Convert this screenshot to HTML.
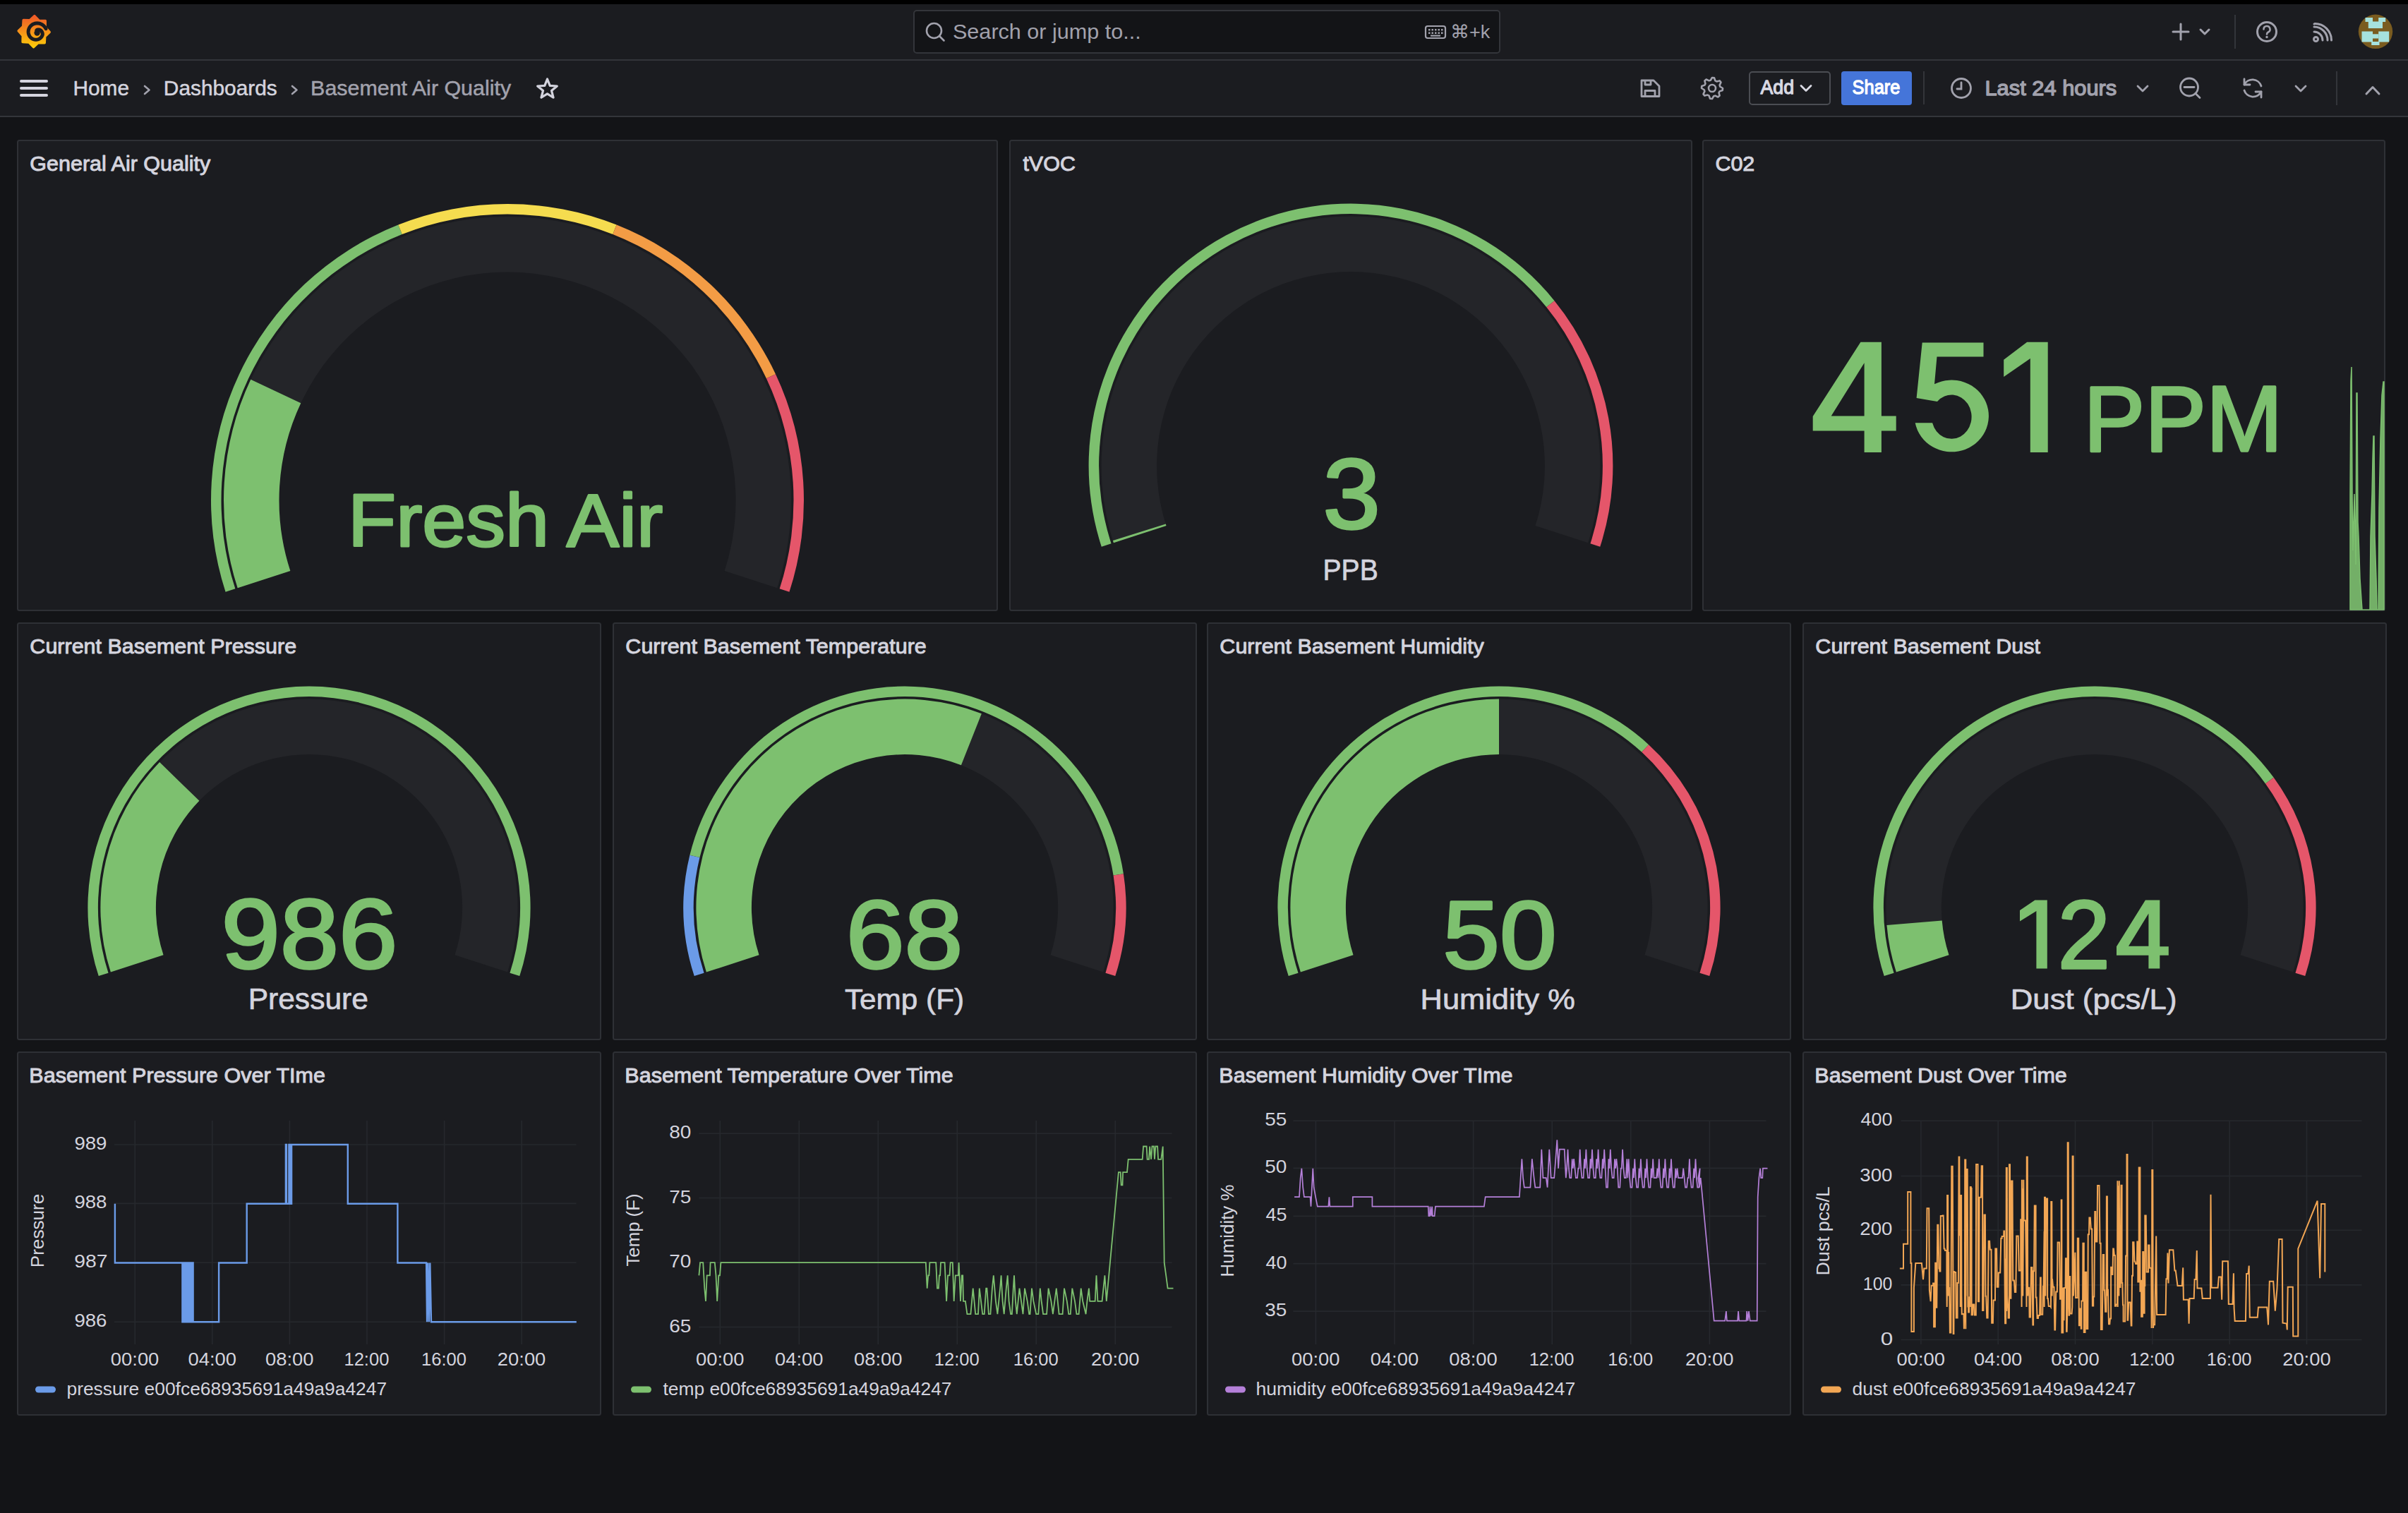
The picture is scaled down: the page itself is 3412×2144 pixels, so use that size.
<!DOCTYPE html>
<html><head><meta charset="utf-8"><title>Basement Air Quality - Dashboards - Grafana</title>
<style>html,body{margin:0;padding:0;background:#131417;overflow:hidden}svg{display:block}text{font-family:"Liberation Sans",sans-serif;white-space:pre}</style>
</head><body>
<svg width="3412" height="2144" viewBox="0 0 3412 2144">
<rect x='0' y='0' width='3412' height='2144' rx='0' fill='#131417'/>
<rect x='0' y='0' width='3412' height='6' rx='0' fill='#000'/>
<rect x='0' y='6' width='3412' height='78' rx='0' fill='#1b1c20'/>
<rect x='0' y='84' width='3412' height='2' rx='0' fill='#33353a'/>
<rect x='0' y='86' width='3412' height='78' rx='0' fill='#1b1c20'/>
<rect x='0' y='164' width='3412' height='2' rx='0' fill='#33353a'/>
<rect x='25' y='199' width='1388' height='666' rx='2.5' fill='#1b1c20' stroke='#2e3035' stroke-width='2'/>
<rect x='1431' y='199' width='966' height='666' rx='2.5' fill='#1b1c20' stroke='#2e3035' stroke-width='2'/>
<rect x='2413' y='199' width='966' height='666' rx='2.5' fill='#1b1c20' stroke='#2e3035' stroke-width='2'/>
<rect x='25' y='883' width='826' height='590' rx='2.5' fill='#1b1c20' stroke='#2e3035' stroke-width='2'/>
<rect x='869' y='883' width='826' height='590' rx='2.5' fill='#1b1c20' stroke='#2e3035' stroke-width='2'/>
<rect x='1711' y='883' width='826' height='590' rx='2.5' fill='#1b1c20' stroke='#2e3035' stroke-width='2'/>
<rect x='2555' y='883' width='826' height='590' rx='2.5' fill='#1b1c20' stroke='#2e3035' stroke-width='2'/>
<rect x='25' y='1491' width='826' height='514' rx='2.5' fill='#1b1c20' stroke='#2e3035' stroke-width='2'/>
<rect x='869' y='1491' width='826' height='514' rx='2.5' fill='#1b1c20' stroke='#2e3035' stroke-width='2'/>
<rect x='1711' y='1491' width='826' height='514' rx='2.5' fill='#1b1c20' stroke='#2e3035' stroke-width='2'/>
<rect x='2555' y='1491' width='826' height='514' rx='2.5' fill='#1b1c20' stroke='#2e3035' stroke-width='2'/>
<path d='M336.68,833.22 A402,402 0 1 1 1101.32,833.22 L1026.67,808.97 A323.5,323.5 0 1 0 411.33,808.97 Z' fill='#242529'/>
<path d='M336.68,833.22 A402,402 0 0 1 355.26,537.84 L426.29,571.26 A323.5,323.5 0 0 0 411.33,808.97 Z' fill='#7dc06f'/>
<path d='M319.56,838.79 A420,420 0 0 1 564.39,318.49 L569.73,331.98 A405.5,405.5 0 0 0 333.35,834.31 Z' fill='#7dc06f'/>
<path d='M564.39,318.49 A420,420 0 0 1 873.61,318.49 L868.27,331.98 A405.5,405.5 0 0 0 569.73,331.98 Z' fill='#f5dc4f'/>
<path d='M873.61,318.49 A420,420 0 0 1 1099.03,530.17 L1085.91,536.35 A405.5,405.5 0 0 0 868.27,331.98 Z' fill='#f39c45'/>
<path d='M1099.03,530.17 A420,420 0 0 1 1118.44,838.79 L1104.65,834.31 A405.5,405.5 0 0 0 1085.91,536.35 Z' fill='#e5566a'/>
<path d='M1577.90,769.21 A353.4,353.4 0 1 1 2250.10,769.21 L2175.45,744.95 A274.9,274.9 0 1 0 1652.55,744.95 Z' fill='#242529'/>
<path d='M1577.90,769.21 A353.4,353.4 0 0 1 1576.88,766.03 L1651.77,742.48 A274.9,274.9 0 0 0 1652.55,744.95 Z' fill='#7dc06f'/>
<path d='M1560.78,774.77 A371.4,371.4 0 0 1 2202.53,426.15 L2191.27,435.28 A356.9,356.9 0 0 0 1574.57,770.29 Z' fill='#7dc06f'/>
<path d='M2202.53,426.15 A371.4,371.4 0 0 1 2267.22,774.77 L2253.43,770.29 A356.9,356.9 0 0 0 2191.27,435.28 Z' fill='#e5566a'/>
<path d='M156.87,1377.55 A295.6,295.6 0 1 1 719.13,1377.55 L644.47,1353.29 A217.10000000000002,217.10000000000002 0 1 0 231.53,1353.29 Z' fill='#242529'/>
<path d='M156.87,1377.55 A295.6,295.6 0 0 1 226.11,1080.09 L282.38,1134.82 A217.10000000000002,217.10000000000002 0 0 0 231.53,1353.29 Z' fill='#7dc06f'/>
<path d='M139.75,1383.11 A313.6,313.6 0 1 1 736.25,1383.11 L722.46,1378.63 A299.1,299.1 0 1 0 153.54,1378.63 Z' fill='#7dc06f'/>
<path d='M1000.87,1377.55 A295.6,295.6 0 1 1 1563.13,1377.55 L1488.47,1353.29 A217.10000000000002,217.10000000000002 0 1 0 1075.53,1353.29 Z' fill='#242529'/>
<path d='M1000.87,1377.55 A295.6,295.6 0 0 1 1390.82,1011.36 L1361.92,1084.35 A217.10000000000002,217.10000000000002 0 0 0 1075.53,1353.29 Z' fill='#7dc06f'/>
<path d='M983.75,1383.11 A313.6,313.6 0 0 1 977.39,1211.65 L991.47,1215.10 A299.1,299.1 0 0 0 997.54,1378.63 Z' fill='#6b9be8'/>
<path d='M977.39,1211.65 A313.6,313.6 0 0 1 1591.92,1238.31 L1577.59,1240.52 A299.1,299.1 0 0 0 991.47,1215.10 Z' fill='#7dc06f'/>
<path d='M1591.92,1238.31 A313.6,313.6 0 0 1 1580.25,1383.11 L1566.46,1378.63 A299.1,299.1 0 0 0 1577.59,1240.52 Z' fill='#e5566a'/>
<path d='M1842.87,1377.55 A295.6,295.6 0 1 1 2405.13,1377.55 L2330.47,1353.29 A217.10000000000002,217.10000000000002 0 1 0 1917.53,1353.29 Z' fill='#242529'/>
<path d='M1842.87,1377.55 A295.6,295.6 0 0 1 2124.00,990.60 L2124.00,1069.10 A217.10000000000002,217.10000000000002 0 0 0 1917.53,1353.29 Z' fill='#7dc06f'/>
<path d='M1825.75,1383.11 A313.6,313.6 0 0 1 2336.07,1055.18 L2326.27,1065.86 A299.1,299.1 0 0 0 1839.54,1378.63 Z' fill='#7dc06f'/>
<path d='M2336.07,1055.18 A313.6,313.6 0 0 1 2422.25,1383.11 L2408.46,1378.63 A299.1,299.1 0 0 0 2326.27,1065.86 Z' fill='#e5566a'/>
<path d='M2686.87,1377.55 A295.6,295.6 0 1 1 3249.13,1377.55 L3174.47,1353.29 A217.10000000000002,217.10000000000002 0 1 0 2761.53,1353.29 Z' fill='#242529'/>
<path d='M2686.87,1377.55 A295.6,295.6 0 0 1 2673.45,1311.06 L2751.67,1304.46 A217.10000000000002,217.10000000000002 0 0 0 2761.53,1353.29 Z' fill='#7dc06f'/>
<path d='M2669.75,1383.11 A313.6,313.6 0 0 1 3221.71,1101.87 L3209.98,1110.39 A299.1,299.1 0 0 0 2683.54,1378.63 Z' fill='#7dc06f'/>
<path d='M3221.71,1101.87 A313.6,313.6 0 0 1 3266.25,1383.11 L3252.46,1378.63 A299.1,299.1 0 0 0 3209.98,1110.39 Z' fill='#e5566a'/>
<path d='M2636.4,484.8 L2665.9,484.8 L2665.9,589.5 L2686.7,589.5 L2686.7,610.4 L2665.9,610.4 L2665.9,641.0 L2641.6,641.0 L2641.6,610.4 L2568.7,610.4 L2568.7,590.1 Z M2594.7,589.5 L2641.6,589.5 L2641.6,514.3 Z' fill='#7dc06f' fill-rule='evenodd'/>
<path d='M2723.7,485.4 L2810.5,485.4 L2810.5,505.6 L2744.5,505.6 L2741,544.3 A52.6,50.9 0 1 1 2713.7,599.3 L2738.1,599.3 A28.3,31.2 0 1 0 2745,568.9 L2735.9,567.5 L2715.6,564 Z' fill='#7dc06f'/>
<path d='M2872.2,484.8 L2901.7,484.8 L2901.7,640.9 L2876.8,640.9 L2876.8,508.0 L2839.2,534.0 L2839.2,509.7 Z' fill='#7dc06f' fill-rule='evenodd'/>
<path d='M2883.4,1275.4 L2900.8,1275.4 L2900.8,1372.6 L2885.4,1372.6 L2885.4,1290.9 L2862.0,1305.4 L2862.0,1289.9 Z' fill='#7dc06f' fill-rule='evenodd'/>
<path d='M3039.9,1275.4 L3060.3,1275.4 L3060.3,1341.2 L3072.8,1341.2 L3072.8,1353.7 L3060.3,1353.7 L3060.3,1372.6 L3044.4,1372.6 L3044.4,1353.7 L2999.0,1353.7 L2999.0,1341.2 Z M3016.0,1340.7 L3044.4,1340.7 L3044.4,1294.4 Z' fill='#7dc06f' fill-rule='evenodd'/>
<rect x='1295' y='15' width='830' height='60' rx='4' fill='#131417' stroke='#33353a' stroke-width='2'/>
<g fill='none' stroke='#a2a2ad' stroke-width='2.6' stroke-linecap='round'><circle cx='1323.5' cy='43.5' r='10.5'/><line x1='1331.5' y1='51.5' x2='1337.5' y2='57.5'/></g>
<g fill='none' stroke='#a2a2ad' stroke-width='2.2'><rect x='2020' y='37' width='28' height='17' rx='3'/></g>
<g fill='#a2a2ad'><rect x='2024.0' y='41' width='2.5' height='2.5'/><rect x='2028.5' y='41' width='2.5' height='2.5'/><rect x='2033.0' y='41' width='2.5' height='2.5'/><rect x='2037.5' y='41' width='2.5' height='2.5'/><rect x='2042.0' y='41' width='2.5' height='2.5'/><rect x='2024.0' y='45.5' width='2.5' height='2.5'/><rect x='2028.5' y='45.5' width='2.5' height='2.5'/><rect x='2033.0' y='45.5' width='2.5' height='2.5'/><rect x='2037.5' y='45.5' width='2.5' height='2.5'/><rect x='2042.0' y='45.5' width='2.5' height='2.5'/><rect x='2027' y='49.5' width='14' height='2.2'/></g>
<g fill='none' stroke='#a2a2ad' stroke-width='3' stroke-linecap='round' stroke-linejoin='round'><line x1='3079' y1='45' x2='3101' y2='45'/><line x1='3090' y1='34' x2='3090' y2='56'/><polyline points='3118,42 3124,48 3130,42'/></g>
<rect x='3166' y='21' width='2' height='48' rx='0' fill='#33353a'/>
<g fill='none' stroke='#a2a2ad' stroke-width='3'><circle cx='3212' cy='45' r='13.5'/></g>
<path d='M3207.5,41.5 a4.5,4.5 0 1 1 6.5,4 c-1.5,0.8 -2,1.5 -2,3' fill='none' stroke='#a2a2ad' stroke-width='2.6' stroke-linecap='round'/><circle cx='3212' cy='52.5' r='1.7' fill='#a2a2ad'/>
<g fill='none' stroke='#a2a2ad' stroke-width='3' stroke-linecap='round'><circle cx='3281.5' cy='55.5' r='3'/><path d='M3279,45 a12,12 0 0 1 12,12'/><path d='M3279,38 a19,19 0 0 1 19,19'/><path d='M3279,34 a0,0 0 0 1 0,0'/><path d='M3280,33.5 a23.5,23.5 0 0 1 23.5,23.5' /></g>
<circle cx='3366' cy='44.8' r='24.2' fill='#7a5c20'/>
<g fill='#a6e2de'><rect x='3351.5' y='25' width='10.5' height='6'/><rect x='3370.2' y='25' width='10' height='6'/><rect x='3355.8' y='30.5' width='20.2' height='9.6'/><rect x='3346.5' y='44.5' width='15.5' height='15'/><rect x='3370.2' y='44.5' width='15' height='15'/><rect x='3362' y='48.3' width='8.2' height='6.2'/><rect x='3360.2' y='59' width='11.3' height='5'/></g>
<defs><linearGradient id='lg' x1='0' y1='0' x2='0' y2='1'><stop offset='0' stop-color='#f05a28'/><stop offset='1' stop-color='#fbca0a'/></linearGradient></defs>
<polygon points='48.97,22.61 55.25,29.13 64.29,29.60 64.12,38.65 70.19,45.37 63.67,51.65 63.20,60.69 54.15,60.52 47.43,66.59 41.15,60.07 32.11,59.60 32.28,50.55 26.21,43.83 32.73,37.55 33.20,28.51 42.25,28.68' fill='url(#lg)' stroke='url(#lg)' stroke-width='3.5' stroke-linejoin='round'/>
<polyline points='64.97,40.68 64.47,39.74 63.90,38.84 63.27,38.00 62.59,37.20 61.85,36.47 61.06,35.79 60.22,35.18 59.35,34.64 58.44,34.17 57.51,33.76 56.55,33.44 55.57,33.18 54.59,33.00 53.59,32.90 52.60,32.87 51.62,32.92 50.64,33.04 49.69,33.23 48.75,33.49 47.84,33.82 46.97,34.22 46.13,34.68 45.33,35.19 44.58,35.77 43.88,36.39 43.23,37.06 42.64,37.78 42.10,38.53 41.63,39.32 41.21,40.13 40.87,40.97 40.59,41.83 40.37,42.70 40.23,43.58 40.15,44.47 40.13,45.35 40.19,46.22 40.31,47.09 40.49,47.93 40.73,48.76 41.04,49.56 41.40,50.33 41.82,51.07 42.28,51.76 42.80,52.42 43.36,53.03 43.96,53.60 44.60,54.11 45.27,54.57 45.97,54.98 46.69,55.33 47.43,55.62 48.19,55.86 48.96,56.03 49.74,56.15 50.51,56.21 51.28,56.20 52.05,56.14 52.80,56.03 53.54,55.86 54.25,55.63 54.95,55.35 55.61,55.03 56.25,54.65 56.85,54.23 57.41,53.78 57.93,53.28 58.41,52.75 58.85,52.19 59.23,51.60 59.57,50.99 59.87,50.36 60.11,49.72 60.30,49.06 60.34,48.37 60.26,47.68 60.13,47.01 59.95,46.37 59.72,45.76 59.45,45.20 59.14,44.67 58.79,44.18 58.41,43.74 58.01,43.34 57.58,42.99 57.14,42.69 56.69,42.44 56.23,42.23 55.77,42.08 55.31,41.97 54.85,41.90 54.41,41.88 53.99,41.91 53.58,41.97 53.19,42.07 52.83,42.20 52.50,42.36 52.20,42.55 51.93,42.77 51.70,43.00' fill='none' stroke='#1b1c20' stroke-width='5.0' stroke-linecap='round' stroke-linejoin='round'/>
<circle cx='52.6' cy='46.6' r='4.2' fill='#1b1c20'/>
<g stroke='#d4d4de' stroke-width='4' stroke-linecap='round'><line x1='30' y1='115' x2='66' y2='115'/><line x1='30' y1='125' x2='66' y2='125'/><line x1='30' y1='135' x2='66' y2='135'/></g>
<g fill='none' stroke='#a2a2ad' stroke-width='2.6' stroke-linecap='round' stroke-linejoin='round'><polyline points='205,122 211.5,127.5 205,133'/><polyline points='414,122 420.5,127.5 414,133'/></g>
<polygon points='775.50,112.00 779.20,121.40 789.29,122.02 781.49,128.45 784.02,138.23 775.50,132.80 766.98,138.23 769.51,128.45 761.71,122.02 771.80,121.40' fill='none' stroke='#d4d4de' stroke-width='3.2' stroke-linejoin='round'/>
<g fill='none' stroke='#a2a2ad' stroke-width='2.8' stroke-linejoin='round'><path d='M2326,114 h17 l8,8 v14.5 h-25 z'/><path d='M2331,114 v6 h8 v-6'/><path d='M2331,136.5 v-8 h14 v8'/></g>
<polygon points='2426.00,110.00 2428.93,110.29 2430.40,114.38 2432.39,115.44 2436.61,114.39 2438.47,116.67 2436.62,120.60 2437.28,122.76 2441.00,125.00 2440.71,127.93 2436.62,129.40 2435.56,131.39 2436.61,135.61 2434.33,137.47 2430.40,135.62 2428.24,136.28 2426.00,140.00 2423.07,139.71 2421.60,135.62 2419.61,134.56 2415.39,135.61 2413.53,133.33 2415.38,129.40 2414.72,127.24 2411.00,125.00 2411.29,122.07 2415.38,120.60 2416.44,118.61 2415.39,114.39 2417.67,112.53 2421.60,114.38 2423.76,113.72' fill='none' stroke='#a2a2ad' stroke-width='2.6' stroke-linejoin='round'/><circle cx='2426' cy='125' r='5' fill='none' stroke='#a2a2ad' stroke-width='2.6'/>
<rect x='2479' y='102' width='114' height='46' rx='4' fill='none' stroke='#4b4d53' stroke-width='2'/>
<polyline points='2552,121.5 2559,128.5 2566,121.5' fill='none' stroke='#d8d8e2' stroke-width='2.8' stroke-linecap='round' stroke-linejoin='round'/>
<rect x='2609' y='101' width='100' height='48' rx='4' fill='#4575d9'/>
<rect x='2725' y='101' width='2' height='47' rx='0' fill='#33353a'/>
<g fill='none' stroke='#a2a2ad' stroke-width='2.8' stroke-linecap='round'><circle cx='2779' cy='125' r='13.5'/><polyline points='2779,117 2779,126 2773,126'/></g>
<polyline points='3029,122 3036,129 3043,122' fill='none' stroke='#a2a2ad' stroke-width='2.8' stroke-linecap='round' stroke-linejoin='round'/>
<g fill='none' stroke='#a2a2ad' stroke-width='2.8' stroke-linecap='round'><circle cx='3102' cy='123.5' r='12.5'/><line x1='3095' y1='123.5' x2='3109' y2='123.5'/><line x1='3111' y1='132.5' x2='3117' y2='138.5'/></g>
<g fill='none' stroke='#a2a2ad' stroke-width='2.8' stroke-linecap='round' stroke-linejoin='round'><path d='M3180,120 A13,13 0 0 1 3204,122'/><polyline points='3180,112 3180,120 3188,120'/><path d='M3204,130 A13,13 0 0 1 3180,128'/><polyline points='3204,138 3204,130 3196,130'/></g>
<polyline points='3253,122 3260,129 3267,122' fill='none' stroke='#a2a2ad' stroke-width='2.8' stroke-linecap='round' stroke-linejoin='round'/>
<rect x='3310' y='101' width='2' height='48' rx='0' fill='#33353a'/>
<polyline points='3353,133 3362,123.5 3371,133' fill='none' stroke='#a2a2ad' stroke-width='3' stroke-linecap='round' stroke-linejoin='round'/>
<g stroke='#26282d' stroke-width='1.6'><line x1='191.2' y1='1588' x2='191.2' y2='1905'/><line x1='300.8' y1='1588' x2='300.8' y2='1905'/><line x1='410.4' y1='1588' x2='410.4' y2='1905'/><line x1='520.0' y1='1588' x2='520.0' y2='1905'/><line x1='629.6' y1='1588' x2='629.6' y2='1905'/><line x1='739.2' y1='1588' x2='739.2' y2='1905'/><line x1='161.9' y1='1622.0' x2='816.5' y2='1622.0'/><line x1='161.9' y1='1705.4' x2='816.5' y2='1705.4'/><line x1='161.9' y1='1789.2' x2='816.5' y2='1789.2'/><line x1='161.9' y1='1873.3' x2='816.5' y2='1873.3'/></g>
<rect x='50' y='1964.5' width='29' height='9' rx='4.5' fill='#6b9be8'/>
<path d='M162.9,1705.8 L162.9,1789.5 L258.4,1789.5 L258.4,1789.5 L258.4,1873.3 L260.3,1873.3 L260.3,1789.5 L262.2,1789.5 L262.2,1873.3 L264.1,1873.3 L264.1,1789.5 L266.0,1789.5 L266.0,1873.3 L267.9,1873.3 L267.9,1789.5 L269.8,1789.5 L269.8,1873.3 L271.7,1873.3 L271.7,1789.5 L273.6,1789.5 L273.6,1873.3 L273.9,1873.3 L310.1,1873.3 L310.1,1789.5 L349.7,1789.5 L349.7,1705.8 L404.9,1705.8 L404.9,1622.0 L405.9,1622.0 L405.9,1705.8 L409.4,1705.8 L409.4,1622.0 L410.4,1622.0 L410.4,1705.8 L410.4,1705.8 L410.4,1622.0 L411.8,1622.0 L411.8,1705.8 L413.1,1705.8 L413.1,1622.0 L414.5,1622.0 L492.8,1622.0 L492.8,1705.8 L563.4,1705.8 L563.4,1789.5 L604.1,1789.5 L605.1,1873.3 L606.5,1789.5 L607.9,1873.3 L609.3,1789.5 L611.0,1873.3 L816.8,1873.3' fill='none' stroke='#6b9be8' stroke-width='2.4' stroke-linejoin='miter'/>
<g stroke='#26282d' stroke-width='1.6'><line x1='1020.3' y1='1588' x2='1020.3' y2='1905'/><line x1='1132.3' y1='1588' x2='1132.3' y2='1905'/><line x1='1244.3' y1='1588' x2='1244.3' y2='1905'/><line x1='1356.3' y1='1588' x2='1356.3' y2='1905'/><line x1='1468.3' y1='1588' x2='1468.3' y2='1905'/><line x1='1580.3' y1='1588' x2='1580.3' y2='1905'/><line x1='990.4' y1='1606.2' x2='1660.5' y2='1606.2'/><line x1='990.4' y1='1697.5' x2='1660.5' y2='1697.5'/><line x1='990.4' y1='1789.2' x2='1660.5' y2='1789.2'/><line x1='990.4' y1='1880.5' x2='1660.5' y2='1880.5'/></g>
<rect x='894' y='1964.5' width='29' height='9' rx='4.5' fill='#7dc06f'/>
<path d='M990.4,1807.4 L992.1,1789.1 L996.2,1789.1 L998.3,1825.6 L1000.0,1843.9 L1001.7,1807.4 L1005.9,1807.4 L1006.6,1789.1 L1012.8,1789.1 L1014.5,1807.4 L1016.2,1843.9 L1018.3,1807.4 L1020.0,1807.4 L1021.4,1789.1 L1310.9,1789.1 L1300.0,1789.1 L1311.8,1789.1 L1313.7,1825.6 L1315.2,1807.4 L1316.4,1807.4 L1317.4,1789.1 L1326.2,1789.1 L1328.0,1825.6 L1329.9,1825.6 L1330.9,1807.4 L1332.1,1807.4 L1333.0,1789.1 L1338.6,1789.1 L1341.1,1843.9 L1343.0,1807.4 L1345.5,1807.4 L1346.7,1789.1 L1349.8,1789.1 L1351.7,1843.9 L1353.8,1807.4 L1357.9,1807.4 L1358.6,1789.1 L1359.5,1807.4 L1361.0,1843.9 L1362.9,1807.4 L1364.2,1807.4 L1365.0,1843.9 L1367.9,1843.9 L1370.4,1862.2 L1375.4,1862.2 L1378.7,1825.6 L1382.2,1862.2 L1386.0,1862.2 L1387.8,1825.6 L1392.2,1862.2 L1394.7,1862.2 L1397.2,1825.6 L1398.4,1825.6 L1400.9,1862.2 L1403.4,1862.2 L1405.9,1825.6 L1407.8,1807.4 L1410.9,1843.9 L1413.4,1862.2 L1417.1,1825.6 L1418.6,1807.4 L1420.6,1843.9 L1422.7,1862.2 L1425.8,1825.6 L1427.7,1807.4 L1429.6,1843.9 L1432.1,1862.2 L1433.9,1862.2 L1435.8,1825.6 L1437.0,1807.4 L1438.9,1843.9 L1440.8,1862.2 L1444.5,1825.6 L1447.0,1843.9 L1449.5,1862.2 L1452.0,1825.6 L1455.7,1843.9 L1458.2,1862.2 L1459.5,1862.2 L1462.0,1825.6 L1464.4,1843.9 L1468.2,1862.2 L1471.3,1862.2 L1473.8,1825.6 L1475.7,1843.9 L1478.1,1862.2 L1483.1,1862.2 L1485.6,1825.6 L1489.4,1843.9 L1491.9,1862.2 L1496.8,1825.6 L1500.6,1862.2 L1505.6,1862.2 L1508.0,1825.6 L1511.8,1843.9 L1514.3,1862.2 L1516.8,1862.2 L1519.3,1825.6 L1523.0,1843.9 L1525.5,1862.2 L1528.6,1862.2 L1531.7,1825.6 L1534.2,1843.9 L1538.6,1862.2 L1540.4,1843.9 L1542.9,1825.6 L1544.2,1843.9 L1551.7,1843.9 L1553.5,1807.4 L1555.4,1843.9 L1561.6,1843.9 L1565.4,1807.4 L1567.8,1843.9 L1584.9,1661.1 L1587.7,1661.1 L1588.7,1679.3 L1590.5,1679.3 L1591.1,1661.1 L1597.0,1661.1 L1598.7,1642.8 L1618.7,1642.8 L1620.1,1624.5 L1624.6,1624.5 L1625.6,1642.8 L1628.0,1642.8 L1629.1,1624.5 L1631.1,1642.8 L1632.5,1624.5 L1634.9,1624.5 L1636.0,1642.8 L1637.3,1624.5 L1640.1,1624.5 L1641.1,1642.8 L1645.3,1642.8 L1647.7,1624.5 L1649.7,1789.1 L1652.2,1807.4 L1654.6,1825.6 L1662.5,1825.6' fill='none' stroke='#7dc06f' stroke-width='1.8' stroke-linejoin='miter'/>
<g stroke='#26282d' stroke-width='1.6'><line x1='1864.4' y1='1588' x2='1864.4' y2='1905'/><line x1='1976.0' y1='1588' x2='1976.0' y2='1905'/><line x1='2087.6' y1='1588' x2='2087.6' y2='1905'/><line x1='2199.2' y1='1588' x2='2199.2' y2='1905'/><line x1='2310.8' y1='1588' x2='2310.8' y2='1905'/><line x1='2422.4' y1='1588' x2='2422.4' y2='1905'/><line x1='1832.4' y1='1588.2' x2='2502.5' y2='1588.2'/><line x1='1832.4' y1='1655.4' x2='2502.5' y2='1655.4'/><line x1='1832.4' y1='1723.4' x2='2502.5' y2='1723.4'/><line x1='1832.4' y1='1790.6' x2='2502.5' y2='1790.6'/><line x1='1832.4' y1='1858.1' x2='2502.5' y2='1858.1'/></g>
<rect x='1736' y='1964.5' width='29' height='9' rx='4.5' fill='#b580d9'/>
<path d='M1834.1,1696.2 L1841.0,1696.2 L1842.7,1669.2 L1844.4,1655.7 L1846.2,1682.7 L1847.9,1696.2 L1856.5,1696.2 L1857.5,1709.7 L1858.9,1682.7 L1860.3,1655.7 L1861.7,1682.7 L1864.1,1696.2 L1866.8,1709.7 L1882.3,1709.7 L1883.4,1696.2 L1884.4,1709.7 L1916.8,1709.7 L1916.8,1696.2 L1944.4,1696.2 L1944.4,1709.7 L2023.7,1709.7 L2024.4,1723.2 L2025.7,1723.2 L2026.4,1709.7 L2027.8,1723.2 L2029.2,1709.7 L2029.9,1723.2 L2032.6,1723.2 L2034.0,1709.7 L2102.9,1709.7 L2104.7,1696.2 L2152.9,1696.2 L2154.6,1669.2 L2156.4,1642.2 L2158.1,1669.2 L2159.8,1682.7 L2168.4,1682.7 L2170.8,1642.2 L2173.6,1669.2 L2175.3,1682.7 L2182.2,1682.7 L2184.3,1628.7 L2186.4,1669.2 L2190.8,1669.2 L2192.6,1682.7 L2195.3,1628.7 L2197.7,1669.2 L2202.2,1669.2 L2204.3,1642.2 L2206.3,1615.2 L2208.1,1655.7 L2209.8,1628.7 L2216.7,1628.7 L2218.8,1669.2 L2220.1,1655.7 L2221.5,1628.7 L2222.9,1655.7 L2224.3,1669.2 L2226.3,1669.2 L2227.7,1642.2 L2228.8,1655.7 L2230.1,1642.2 L2231.5,1655.7 L2232.9,1669.2 L2235.0,1669.2 L2236.3,1655.7 L2237.4,1655.7 L2238.7,1628.7 L2240.1,1655.7 L2241.5,1669.2 L2243.6,1669.2 L2245.0,1642.2 L2246.0,1655.7 L2247.4,1628.7 L2248.7,1655.7 L2250.1,1669.2 L2252.2,1669.2 L2253.6,1642.2 L2254.6,1655.7 L2256.0,1628.7 L2257.4,1655.7 L2258.7,1669.2 L2260.8,1669.2 L2262.2,1642.2 L2263.2,1655.7 L2264.6,1628.7 L2266.0,1655.7 L2267.4,1669.2 L2269.4,1669.2 L2270.8,1642.2 L2271.8,1655.7 L2273.2,1628.7 L2274.6,1655.7 L2276.0,1682.7 L2278.0,1682.7 L2279.4,1642.2 L2280.5,1655.7 L2281.8,1628.7 L2283.2,1655.7 L2284.6,1669.2 L2286.7,1669.2 L2288.0,1642.2 L2289.1,1655.7 L2290.4,1642.2 L2291.8,1655.7 L2293.2,1682.7 L2295.3,1682.7 L2296.7,1655.7 L2297.7,1655.7 L2299.1,1628.7 L2300.4,1655.7 L2301.8,1669.2 L2303.9,1669.2 L2305.3,1642.2 L2306.3,1669.2 L2307.7,1642.2 L2309.1,1669.2 L2310.4,1682.7 L2312.5,1682.7 L2313.9,1655.7 L2314.9,1669.2 L2316.3,1642.2 L2317.7,1669.2 L2319.1,1682.7 L2321.1,1682.7 L2322.5,1655.7 L2323.5,1669.2 L2324.9,1642.2 L2326.3,1669.2 L2327.7,1682.7 L2329.7,1682.7 L2331.1,1655.7 L2332.2,1669.2 L2333.5,1642.2 L2334.9,1669.2 L2336.3,1682.7 L2338.4,1682.7 L2339.7,1655.7 L2340.8,1669.2 L2342.2,1642.2 L2343.5,1669.2 L2344.9,1669.2 L2347.0,1669.2 L2348.4,1655.7 L2349.4,1669.2 L2350.8,1642.2 L2352.1,1669.2 L2353.5,1682.7 L2355.6,1682.7 L2357.0,1655.7 L2358.0,1669.2 L2359.4,1642.2 L2360.8,1669.2 L2362.1,1682.7 L2364.2,1682.7 L2365.6,1655.7 L2366.6,1669.2 L2368.0,1642.2 L2369.4,1669.2 L2370.8,1682.7 L2372.8,1682.7 L2374.2,1655.7 L2375.2,1669.2 L2376.6,1655.7 L2378.0,1669.2 L2379.4,1669.2 L2381.4,1669.2 L2382.8,1669.2 L2383.9,1669.2 L2385.2,1655.7 L2386.6,1669.2 L2388.0,1682.7 L2390.1,1682.7 L2391.4,1669.2 L2392.5,1669.2 L2393.9,1642.2 L2395.2,1669.2 L2396.6,1682.7 L2398.7,1682.7 L2400.1,1655.7 L2401.1,1669.2 L2402.5,1642.2 L2403.9,1669.2 L2405.2,1682.7 L2407.3,1682.7 L2408.7,1655.7 L2406.3,1669.2 L2408.0,1682.7 L2409.7,1669.2 L2428.7,1871.6 L2444.2,1871.6 L2445.9,1858.1 L2446.9,1871.6 L2462.1,1871.6 L2463.1,1858.1 L2464.2,1871.6 L2474.5,1871.6 L2475.2,1858.1 L2476.6,1871.6 L2478.0,1858.1 L2479.7,1871.6 L2489.7,1871.6 L2490.7,1696.2 L2492.4,1669.2 L2494.2,1655.7 L2495.2,1669.2 L2497.3,1669.2 L2497.9,1655.7 L2504.5,1655.7' fill='none' stroke='#b580d9' stroke-width='1.7' stroke-linejoin='miter'/>
<g stroke='#26282d' stroke-width='1.6'><line x1='2721.9' y1='1588' x2='2721.9' y2='1905'/><line x1='2831.2' y1='1588' x2='2831.2' y2='1905'/><line x1='2940.5' y1='1588' x2='2940.5' y2='1905'/><line x1='3049.9' y1='1588' x2='3049.9' y2='1905'/><line x1='3159.2' y1='1588' x2='3159.2' y2='1905'/><line x1='3268.5' y1='1588' x2='3268.5' y2='1905'/><line x1='2693.6' y1='1588.2' x2='3346.5' y2='1588.2'/><line x1='2693.6' y1='1666.5' x2='3346.5' y2='1666.5'/><line x1='2693.6' y1='1743.3' x2='3346.5' y2='1743.3'/><line x1='2693.6' y1='1820.9' x2='3346.5' y2='1820.9'/><line x1='2693.6' y1='1898.5' x2='3346.5' y2='1898.5'/></g>
<rect x='2580' y='1964.5' width='29' height='9' rx='4.5' fill='#f2a654'/>
<path d='M2691.9,1797.6 L2697.0,1797.6 L2697.0,1762.7 L2703.2,1762.7 L2703.2,1689.0 L2707.4,1689.0 L2707.4,1789.9 L2708.4,1789.9 L2708.4,1886.9 L2711.9,1886.9 L2711.9,1824.8 L2714.3,1789.9 L2722.9,1789.9 L2725.0,1813.2 L2726.3,1797.6 L2729.8,1797.6 L2730.5,1712.3 L2733.2,1712.3 L2733.9,1828.7 L2735.6,1844.2 L2736.7,1821.7 L2739.1,1821.7 L2739.1,1818.5 L2740.1,1818.5 L2740.1,1880.2 L2741.9,1880.2 L2742.2,1789.7 L2743.2,1789.7 L2743.2,1852.7 L2744.3,1852.7 L2745.3,1735.8 L2746.3,1735.8 L2747.4,1797.5 L2748.1,1797.5 L2748.4,1801.4 L2749.4,1801.4 L2749.8,1723.1 L2752.2,1723.1 L2752.5,1722.5 L2753.6,1722.5 L2754.6,1769.6 L2755.6,1769.6 L2756.0,1771.9 L2758.4,1771.9 L2758.4,1824.9 L2758.7,1852.0 L2759.1,1824.9 L2759.1,1692.9 L2759.8,1773.9 L2760.1,1692.9 L2760.5,1836.4 L2761.2,1773.9 L2761.5,1825.1 L2762.2,1825.1 L2762.9,1888.6 L2764.3,1888.6 L2765.3,1652.8 L2766.7,1652.8 L2767.7,1889.9 L2768.4,1889.9 L2768.7,1801.9 L2769.4,1801.9 L2769.8,1803.0 L2771.2,1803.0 L2771.8,1867.4 L2773.6,1867.4 L2773.6,1818.0 L2774.9,1818.0 L2775.6,1639.4 L2776.3,1639.4 L2776.7,1750.3 L2777.7,1750.3 L2777.7,1852.0 L2778.0,1692.9 L2778.4,1743.1 L2779.1,1743.1 L2779.1,1692.9 L2779.4,1836.4 L2779.8,1862.2 L2780.5,1862.2 L2780.8,1861.9 L2782.5,1861.9 L2782.9,1883.2 L2783.9,1852.0 L2784.2,1642.5 L2785.3,1883.2 L2785.3,1642.5 L2785.6,1836.4 L2786.3,1656.9 L2787.7,1656.9 L2788.4,1851.5 L2789.1,1851.5 L2789.1,1859.6 L2790.1,1859.6 L2790.5,1838.2 L2791.5,1838.2 L2791.5,1852.0 L2791.8,1681.3 L2792.5,1683.0 L2792.9,1681.3 L2793.2,1836.4 L2793.6,1683.0 L2793.6,1863.3 L2795.3,1863.3 L2795.6,1848.5 L2797.3,1848.5 L2798.0,1863.6 L2799.8,1863.6 L2800.1,1649.9 L2802.5,1649.9 L2802.9,1844.3 L2804.2,1844.3 L2804.6,1696.8 L2807.0,1696.8 L2807.7,1652.2 L2809.1,1652.2 L2809.1,1856.9 L2810.4,1856.9 L2811.5,1721.5 L2812.9,1721.5 L2813.5,1836.7 L2814.2,1836.7 L2815.3,1867.4 L2816.6,1867.4 L2817.7,1758.8 L2819.1,1758.8 L2819.8,1770.8 L2821.5,1770.8 L2822.2,1874.7 L2823.9,1874.7 L2824.6,1842.5 L2827.0,1842.5 L2827.3,1769.6 L2829.1,1769.6 L2829.7,1823.7 L2831.5,1823.7 L2831.8,1803.6 L2834.2,1803.6 L2835.3,1754.7 L2836.6,1754.7 L2836.6,1752.1 L2839.1,1752.1 L2839.4,1744.4 L2840.1,1744.4 L2841.1,1875.3 L2842.2,1875.3 L2842.2,1783.6 L2842.5,1852.0 L2842.8,1654.1 L2843.2,1783.6 L2843.2,1858.1 L2843.9,1654.1 L2844.2,1836.4 L2845.6,1858.1 L2845.6,1868.6 L2846.6,1852.0 L2847.0,1868.6 L2847.0,1723.8 L2847.0,1650.2 L2848.0,1650.2 L2848.4,1836.4 L2848.7,1723.8 L2848.7,1839.8 L2849.4,1839.8 L2850.1,1673.5 L2851.5,1673.5 L2852.2,1814.5 L2853.9,1814.5 L2854.9,1830.9 L2856.3,1830.9 L2857.3,1751.4 L2859.7,1751.4 L2860.8,1800.6 L2863.2,1800.6 L2863.2,1728.3 L2863.9,1728.3 L2864.6,1852.0 L2864.9,1671.8 L2864.9,1685.2 L2865.9,1685.2 L2866.3,1836.4 L2867.3,1671.8 L2867.7,1729.6 L2870.1,1729.6 L2871.1,1799.8 L2871.5,1852.0 L2871.8,1638.6 L2872.8,1799.8 L2872.8,1638.6 L2873.2,1836.4 L2873.5,1824.8 L2875.2,1824.8 L2875.6,1866.6 L2877.0,1866.6 L2878.0,1796.1 L2879.4,1796.1 L2880.4,1877.4 L2881.1,1877.4 L2881.1,1801.3 L2882.1,1801.3 L2882.8,1708.4 L2884.6,1708.4 L2884.6,1838.6 L2885.6,1838.6 L2886.6,1867.9 L2888.0,1867.9 L2888.3,1864.1 L2890.1,1864.1 L2891.1,1810.4 L2891.8,1810.4 L2891.8,1862.7 L2894.2,1862.7 L2894.9,1822.7 L2895.6,1822.7 L2896.6,1744.8 L2896.6,1852.0 L2897.0,1696.8 L2898.0,1696.8 L2898.3,1836.4 L2899.0,1744.8 L2899.4,1698.5 L2901.1,1698.5 L2901.1,1839.9 L2901.8,1839.9 L2902.8,1850.9 L2905.2,1850.9 L2905.9,1852.0 L2906.3,1812.4 L2906.3,1703.0 L2907.3,1703.0 L2907.6,1836.4 L2908.0,1812.4 L2909.0,1823.7 L2910.4,1823.7 L2911.4,1884.6 L2912.1,1884.6 L2913.2,1830.4 L2914.9,1830.4 L2915.6,1760.5 L2918.0,1760.5 L2919.0,1840.7 L2920.7,1840.7 L2920.7,1700.4 L2921.4,1700.4 L2921.4,1888.4 L2923.2,1888.4 L2923.2,1825.5 L2923.8,1825.5 L2923.8,1870.3 L2924.5,1870.3 L2924.9,1825.0 L2926.6,1825.0 L2926.9,1783.3 L2928.0,1783.3 L2928.0,1886.7 L2928.7,1886.7 L2929.4,1852.0 L2929.7,1864.7 L2929.7,1619.2 L2930.7,1619.2 L2931.1,1836.4 L2932.1,1864.7 L2932.1,1809.0 L2933.2,1809.0 L2933.2,1861.5 L2935.6,1861.5 L2936.3,1852.0 L2936.6,1803.4 L2936.6,1638.6 L2937.6,1638.6 L2938.0,1803.4 L2938.0,1774.8 L2938.0,1836.4 L2940.4,1774.8 L2941.1,1839.1 L2943.5,1839.1 L2943.8,1754.8 L2945.2,1754.8 L2945.9,1878.3 L2946.9,1878.3 L2947.6,1854.5 L2948.7,1854.5 L2948.7,1882.8 L2949.4,1882.8 L2949.4,1843.6 L2951.1,1843.6 L2951.4,1761.8 L2952.8,1761.8 L2952.8,1888.0 L2954.5,1888.0 L2954.5,1802.8 L2956.2,1802.8 L2956.6,1882.9 L2958.3,1882.9 L2958.7,1749.2 L2960.0,1749.2 L2960.4,1725.5 L2961.8,1725.5 L2962.8,1741.6 L2964.2,1741.6 L2964.9,1850.4 L2966.2,1850.4 L2966.2,1837.4 L2967.3,1837.4 L2968.3,1716.9 L2969.3,1716.9 L2969.7,1759.6 L2971.4,1759.6 L2972.1,1679.9 L2974.5,1679.9 L2975.5,1761.8 L2976.6,1761.8 L2976.9,1884.1 L2978.7,1884.1 L2979.7,1777.9 L2981.1,1777.9 L2981.4,1828.2 L2982.1,1828.2 L2983.1,1858.7 L2984.5,1858.7 L2984.5,1852.0 L2984.9,1694.5 L2985.2,1826.7 L2985.9,1694.5 L2986.2,1836.4 L2986.9,1826.7 L2988.0,1876.2 L2989.3,1876.2 L2990.0,1868.4 L2991.1,1868.4 L2991.1,1795.7 L2992.1,1795.7 L2992.1,1805.9 L2993.5,1805.9 L2994.2,1769.6 L2994.9,1769.6 L2995.9,1779.0 L2996.9,1779.0 L2996.9,1850.7 L2998.3,1850.7 L2998.3,1848.6 L3000.0,1848.6 L3000.4,1673.3 L3000.7,1852.0 L3001.1,1681.3 L3002.1,1681.3 L3002.4,1836.4 L3002.8,1673.3 L3003.5,1824.0 L3004.5,1824.0 L3005.5,1679.8 L3006.6,1679.8 L3006.6,1818.0 L3007.3,1818.0 L3008.0,1849.2 L3008.6,1849.2 L3008.6,1872.6 L3011.1,1872.6 L3012.1,1779.5 L3013.5,1779.5 L3013.5,1636.0 L3014.5,1636.0 L3014.5,1870.8 L3015.2,1870.8 L3016.2,1845.4 L3018.6,1845.4 L3019.7,1878.4 L3020.4,1878.4 L3021.0,1807.7 L3022.1,1807.7 L3022.1,1760.2 L3023.5,1760.2 L3024.5,1787.6 L3025.2,1787.6 L3026.2,1791.1 L3027.9,1791.1 L3028.3,1759.4 L3029.3,1759.4 L3029.3,1816.6 L3030.7,1816.6 L3030.7,1654.4 L3032.4,1654.4 L3032.4,1829.8 L3033.5,1829.8 L3033.5,1814.7 L3034.1,1814.7 L3034.1,1865.8 L3035.9,1865.8 L3036.2,1773.9 L3037.2,1773.9 L3037.9,1860.7 L3038.6,1860.7 L3038.6,1821.9 L3039.3,1821.9 L3039.3,1722.4 L3040.7,1722.4 L3041.7,1802.4 L3044.1,1802.4 L3044.1,1764.4 L3045.5,1764.4 L3045.9,1796.7 L3048.3,1796.7 L3048.6,1881.9 L3049.0,1852.0 L3049.3,1658.0 L3050.3,1658.0 L3050.7,1836.4 L3051.0,1881.9 L3051.4,1877.3 L3053.1,1877.3 L3055.2,1751.5 L3056.1,1863.1 L3068.6,1863.1 L3069.4,1812.2 L3070.7,1812.2 L3071.4,1775.6 L3072.5,1818.5 L3073.9,1771.2 L3079.3,1771.2 L3081.4,1800.6 L3082.8,1800.6 L3085.5,1822.0 L3091.8,1822.0 L3093.2,1796.2 L3093.9,1841.7 L3100.7,1841.7 L3101.6,1875.6 L3102.5,1839.9 L3108.7,1839.9 L3109.6,1813.1 L3111.4,1813.1 L3112.8,1772.1 L3113.5,1825.6 L3119.4,1825.6 L3120.7,1839.9 L3131.9,1839.9 L3132.5,1692.7 L3133.5,1824.7 L3142.6,1824.7 L3143.9,1809.6 L3147.1,1809.6 L3148.2,1841.7 L3149.2,1787.2 L3156.9,1787.2 L3157.8,1847.9 L3163.5,1847.9 L3164.9,1804.2 L3165.6,1854.2 L3166.7,1872.0 L3181.9,1872.0 L3183.1,1805.1 L3185.5,1805.1 L3186.7,1793.5 L3187.8,1866.7 L3198.8,1866.7 L3199.9,1852.4 L3212.2,1852.4 L3214.0,1877.4 L3215.8,1815.8 L3221.2,1815.8 L3223.8,1857.7 L3226.5,1825.6 L3229.2,1756.0 L3233.6,1756.0 L3234.5,1874.7 L3239.9,1875.6 L3240.8,1884.5 L3241.7,1823.8 L3248.8,1823.8 L3249.2,1893.4 L3256.3,1893.4 L3256.3,1769.4 L3283.6,1701.6 L3287.2,1811.3 L3289.0,1706.0 L3294.3,1706.0 L3294.3,1802.4' fill='none' stroke='#f2a654' stroke-width='2.0' stroke-linejoin='miter'/>
<path d='M3330,864 L3330,700 L3331,540 L3332,520 L3333,700 L3334,780 L3336,700 L3338,800 L3339,557 L3340,557 L3341,740 L3342,760 L3344,820 L3346,850 L3347,864 L3358,864 L3359,760 L3361,700 L3362,650 L3363,618 L3364,618 L3365,760 L3367,820 L3368,864 L3370,864 L3371,720 L3373,620 L3375,560 L3377,541 L3378,541 L3378,864 Z' fill='#7dc06f' fill-opacity='0.9' stroke='#7dc06f' stroke-width='1.5'/>
<text x='42.38' y='241.7' font-size='30.0' stroke='#d4d4de' stroke-width='1.0' stroke-linejoin='round' fill='#d4d4de' textLength='255.81' lengthAdjust='spacingAndGlyphs'>General Air Quality</text>
<text x='1449.40' y='241.7' font-size='30.0' stroke='#d4d4de' stroke-width='1.0' stroke-linejoin='round' fill='#d4d4de' textLength='74.53' lengthAdjust='spacingAndGlyphs'>tVOC</text>
<text x='2430.38' y='241.7' font-size='30.0' stroke='#d4d4de' stroke-width='1.0' stroke-linejoin='round' fill='#d4d4de' textLength='55.93' lengthAdjust='spacingAndGlyphs'>C02</text>
<text x='42.38' y='925.7' font-size='30.0' stroke='#d4d4de' stroke-width='1.0' stroke-linejoin='round' fill='#d4d4de' textLength='377.78' lengthAdjust='spacingAndGlyphs'>Current Basement Pressure</text>
<text x='886.38' y='925.7' font-size='30.0' stroke='#d4d4de' stroke-width='1.0' stroke-linejoin='round' fill='#d4d4de' textLength='426.37' lengthAdjust='spacingAndGlyphs'>Current Basement Temperature</text>
<text x='1728.38' y='925.7' font-size='30.0' stroke='#d4d4de' stroke-width='1.0' stroke-linejoin='round' fill='#d4d4de' textLength='374.36' lengthAdjust='spacingAndGlyphs'>Current Basement Humidity</text>
<text x='2572.38' y='925.7' font-size='30.0' stroke='#d4d4de' stroke-width='1.0' stroke-linejoin='round' fill='#d4d4de' textLength='318.48' lengthAdjust='spacingAndGlyphs'>Current Basement Dust</text>
<text x='41.37' y='1533.7' font-size='30.0' stroke='#d4d4de' stroke-width='1.0' stroke-linejoin='round' fill='#d4d4de' textLength='419.54' lengthAdjust='spacingAndGlyphs'>Basement Pressure Over TIme</text>
<text x='885.37' y='1533.7' font-size='30.0' stroke='#d4d4de' stroke-width='1.0' stroke-linejoin='round' fill='#d4d4de' textLength='465.30' lengthAdjust='spacingAndGlyphs'>Basement Temperature Over Time</text>
<text x='1727.37' y='1533.7' font-size='30.0' stroke='#d4d4de' stroke-width='1.0' stroke-linejoin='round' fill='#d4d4de' textLength='416.13' lengthAdjust='spacingAndGlyphs'>Basement Humidity Over TIme</text>
<text x='2571.37' y='1533.7' font-size='30.0' stroke='#d4d4de' stroke-width='1.0' stroke-linejoin='round' fill='#d4d4de' textLength='357.43' lengthAdjust='spacingAndGlyphs'>Basement Dust Over Time</text>
<text x='493.10' y='774.4' font-size='106.1' stroke='#7dc06f' stroke-width='3' stroke-linejoin='round' fill='#7dc06f' textLength='445.96' lengthAdjust='spacingAndGlyphs'>Fresh Air</text>
<text x='1874.56' y='748.75' font-size='141.0' stroke='#7dc06f' stroke-width='3.5' stroke-linejoin='round' fill='#7dc06f' textLength='81.35' lengthAdjust='spacingAndGlyphs'>3</text>
<text x='1874.53' y='821.65' font-size='41.6' stroke='#d4d4de' stroke-width='0.7' stroke-linejoin='round' fill='#d4d4de' textLength='78.22' lengthAdjust='spacingAndGlyphs'>PPB</text>
<text x='2952.62' y='638.95' font-size='130.9' stroke='#7dc06f' stroke-width='3.5' stroke-linejoin='round' fill='#7dc06f' textLength='281.77' lengthAdjust='spacingAndGlyphs'>PPM</text>
<text x='313.45' y='1371.95' font-size='138.4' stroke='#7dc06f' stroke-width='3.5' stroke-linejoin='round' fill='#7dc06f' textLength='249.96' lengthAdjust='spacingAndGlyphs'>986</text>
<text x='351.67' y='1430.3500000000001' font-size='42.8' stroke='#d4d4de' stroke-width='0.7' stroke-linejoin='round' fill='#d4d4de' textLength='170.24' lengthAdjust='spacingAndGlyphs'>Pressure</text>
<text x='1198.66' y='1371.95' font-size='137.4' stroke='#7dc06f' stroke-width='3.5' stroke-linejoin='round' fill='#7dc06f' textLength='165.69' lengthAdjust='spacingAndGlyphs'>68</text>
<text x='1196.91' y='1430.3500000000001' font-size='40.6' stroke='#d4d4de' stroke-width='0.7' stroke-linejoin='round' fill='#d4d4de' textLength='169.15' lengthAdjust='spacingAndGlyphs'>Temp (F)</text>
<text x='2044.32' y='1371.95' font-size='136.0' stroke='#7dc06f' stroke-width='3.5' stroke-linejoin='round' fill='#7dc06f' textLength='161.37' lengthAdjust='spacingAndGlyphs'>50</text>
<text x='2012.64' y='1430.3500000000001' font-size='40.6' stroke='#d4d4de' stroke-width='0.7' stroke-linejoin='round' fill='#d4d4de' textLength='219.29' lengthAdjust='spacingAndGlyphs'>Humidity %</text>
<text x='2915.74' y='1371.75' font-size='137.1' stroke='#7dc06f' stroke-width='3.5' stroke-linejoin='round' fill='#7dc06f' textLength='74.19' lengthAdjust='spacingAndGlyphs'>2</text>
<text x='2848.72' y='1430.3500000000001' font-size='40.6' stroke='#d4d4de' stroke-width='0.7' stroke-linejoin='round' fill='#d4d4de' textLength='235.80' lengthAdjust='spacingAndGlyphs'>Dust (pcs/L)</text>
<text x='1349.98' y='55' font-size='30' fill='#a2a2ad' textLength='266.87' lengthAdjust='spacingAndGlyphs'>Search or jump to...</text>
<text x='2054.88' y='54.2' font-size='26' fill='#a2a2ad' textLength='56.31' lengthAdjust='spacingAndGlyphs'>⌘+k</text>
<text x='103.48' y='134.8' font-size='29.6' stroke='#d4d4de' stroke-width='0.5' stroke-linejoin='round' fill='#d4d4de' textLength='79.58' lengthAdjust='spacingAndGlyphs'>Home</text>
<text x='231.88' y='134.8' font-size='29.6' stroke='#d4d4de' stroke-width='0.5' stroke-linejoin='round' fill='#d4d4de' textLength='160.80' lengthAdjust='spacingAndGlyphs'>Dashboards</text>
<text x='440.14' y='134.8' font-size='29.6' stroke='#a2a2ad' stroke-width='0.5' stroke-linejoin='round' fill='#a2a2ad' textLength='284.01' lengthAdjust='spacingAndGlyphs'>Basement Air Quality</text>
<text x='2494.50' y='132.6' font-size='28.5' stroke='#d8d8e2' stroke-width='1.3' stroke-linejoin='round' fill='#d8d8e2' textLength='47.61' lengthAdjust='spacingAndGlyphs'>Add</text>
<text x='2624.61' y='132.6' font-size='28.5' stroke='#ffffff' stroke-width='1.3' stroke-linejoin='round' fill='#ffffff' textLength='67.84' lengthAdjust='spacingAndGlyphs'>Share</text>
<text x='2812.41' y='134.6' font-size='29.5' stroke='#a2a2ad' stroke-width='1.3' stroke-linejoin='round' fill='#a2a2ad' textLength='186.89' lengthAdjust='spacingAndGlyphs'>Last 24 hours</text>
<text x='156.88' y='1934.8' font-size='25.5' fill='#d4d4de' textLength='68.44' lengthAdjust='spacingAndGlyphs'>00:00</text>
<text x='266.48' y='1934.8' font-size='25.5' fill='#d4d4de' textLength='68.44' lengthAdjust='spacingAndGlyphs'>04:00</text>
<text x='376.08' y='1934.8' font-size='25.5' fill='#d4d4de' textLength='68.44' lengthAdjust='spacingAndGlyphs'>08:00</text>
<text x='487.45' y='1934.8' font-size='25.5' fill='#d4d4de' textLength='63.92' lengthAdjust='spacingAndGlyphs'>12:00</text>
<text x='597.05' y='1934.8' font-size='25.5' fill='#d4d4de' textLength='63.92' lengthAdjust='spacingAndGlyphs'>16:00</text>
<text x='704.88' y='1934.8' font-size='25.5' fill='#d4d4de' textLength='68.44' lengthAdjust='spacingAndGlyphs'>20:00</text>
<text x='105.42' y='1629.0' font-size='25.5' fill='#d4d4de' textLength='46.08' lengthAdjust='spacingAndGlyphs'>989</text>
<text x='105.42' y='1712.4' font-size='25.5' fill='#d4d4de' textLength='46.08' lengthAdjust='spacingAndGlyphs'>988</text>
<text x='105.39' y='1796.2' font-size='25.5' fill='#d4d4de' textLength='47.23' lengthAdjust='spacingAndGlyphs'>987</text>
<text x='105.42' y='1880.3' font-size='25.5' fill='#d4d4de' textLength='46.08' lengthAdjust='spacingAndGlyphs'>986</text>
<text transform='translate(62,1743.5) rotate(-90)' x='-52.82' y='0' font-size='26.5' fill='#d4d4de' textLength='104.71' lengthAdjust='spacingAndGlyphs'>Pressure</text>
<text x='94.46' y='1976.5' font-size='25.5' fill='#d4d4de' textLength='453.72' lengthAdjust='spacingAndGlyphs'>pressure e00fce68935691a49a9a4247</text>
<text x='985.98' y='1934.8' font-size='25.5' fill='#d4d4de' textLength='68.44' lengthAdjust='spacingAndGlyphs'>00:00</text>
<text x='1097.98' y='1934.8' font-size='25.5' fill='#d4d4de' textLength='68.44' lengthAdjust='spacingAndGlyphs'>04:00</text>
<text x='1209.98' y='1934.8' font-size='25.5' fill='#d4d4de' textLength='68.44' lengthAdjust='spacingAndGlyphs'>08:00</text>
<text x='1323.75' y='1934.8' font-size='25.5' fill='#d4d4de' textLength='63.92' lengthAdjust='spacingAndGlyphs'>12:00</text>
<text x='1435.75' y='1934.8' font-size='25.5' fill='#d4d4de' textLength='63.92' lengthAdjust='spacingAndGlyphs'>16:00</text>
<text x='1545.98' y='1934.8' font-size='25.5' fill='#d4d4de' textLength='68.44' lengthAdjust='spacingAndGlyphs'>20:00</text>
<text x='948.30' y='1613.2' font-size='25.5' fill='#d4d4de' textLength='31.11' lengthAdjust='spacingAndGlyphs'>80</text>
<text x='948.30' y='1704.5' font-size='25.5' fill='#d4d4de' textLength='31.11' lengthAdjust='spacingAndGlyphs'>75</text>
<text x='948.30' y='1796.2' font-size='25.5' fill='#d4d4de' textLength='31.11' lengthAdjust='spacingAndGlyphs'>70</text>
<text x='948.30' y='1887.5' font-size='25.5' fill='#d4d4de' textLength='31.11' lengthAdjust='spacingAndGlyphs'>65</text>
<text transform='translate(906,1743.5) rotate(-90)' x='-51.00' y='0' font-size='26.5' fill='#d4d4de' textLength='102.97' lengthAdjust='spacingAndGlyphs'>Temp (F)</text>
<text x='939.50' y='1976.5' font-size='25.5' fill='#d4d4de' textLength='409.05' lengthAdjust='spacingAndGlyphs'>temp e00fce68935691a49a9a4247</text>
<text x='1830.08' y='1934.8' font-size='25.5' fill='#d4d4de' textLength='68.44' lengthAdjust='spacingAndGlyphs'>00:00</text>
<text x='1941.68' y='1934.8' font-size='25.5' fill='#d4d4de' textLength='68.44' lengthAdjust='spacingAndGlyphs'>04:00</text>
<text x='2053.28' y='1934.8' font-size='25.5' fill='#d4d4de' textLength='68.44' lengthAdjust='spacingAndGlyphs'>08:00</text>
<text x='2166.65' y='1934.8' font-size='25.5' fill='#d4d4de' textLength='63.92' lengthAdjust='spacingAndGlyphs'>12:00</text>
<text x='2278.25' y='1934.8' font-size='25.5' fill='#d4d4de' textLength='63.92' lengthAdjust='spacingAndGlyphs'>16:00</text>
<text x='2388.08' y='1934.8' font-size='25.5' fill='#d4d4de' textLength='68.44' lengthAdjust='spacingAndGlyphs'>20:00</text>
<text x='1792.30' y='1595.2' font-size='25.5' fill='#d4d4de' textLength='31.11' lengthAdjust='spacingAndGlyphs'>55</text>
<text x='1792.30' y='1662.4' font-size='25.5' fill='#d4d4de' textLength='31.11' lengthAdjust='spacingAndGlyphs'>50</text>
<text x='1793.40' y='1730.4' font-size='25.5' fill='#d4d4de' textLength='30.00' lengthAdjust='spacingAndGlyphs'>45</text>
<text x='1793.40' y='1797.6' font-size='25.5' fill='#d4d4de' textLength='30.00' lengthAdjust='spacingAndGlyphs'>40</text>
<text x='1792.30' y='1865.1' font-size='25.5' fill='#d4d4de' textLength='31.11' lengthAdjust='spacingAndGlyphs'>35</text>
<text transform='translate(1748,1743.5) rotate(-90)' x='-65.95' y='0' font-size='26.5' fill='#d4d4de' textLength='130.95' lengthAdjust='spacingAndGlyphs'>Humidity %</text>
<text x='1779.41' y='1976.5' font-size='25.5' fill='#d4d4de' textLength='452.80' lengthAdjust='spacingAndGlyphs'>humidity e00fce68935691a49a9a4247</text>
<text x='2687.58' y='1934.8' font-size='25.5' fill='#d4d4de' textLength='68.44' lengthAdjust='spacingAndGlyphs'>00:00</text>
<text x='2796.90' y='1934.8' font-size='25.5' fill='#d4d4de' textLength='68.44' lengthAdjust='spacingAndGlyphs'>04:00</text>
<text x='2906.22' y='1934.8' font-size='25.5' fill='#d4d4de' textLength='68.44' lengthAdjust='spacingAndGlyphs'>08:00</text>
<text x='3017.31' y='1934.8' font-size='25.5' fill='#d4d4de' textLength='63.92' lengthAdjust='spacingAndGlyphs'>12:00</text>
<text x='3126.63' y='1934.8' font-size='25.5' fill='#d4d4de' textLength='63.92' lengthAdjust='spacingAndGlyphs'>16:00</text>
<text x='3234.18' y='1934.8' font-size='25.5' fill='#d4d4de' textLength='68.44' lengthAdjust='spacingAndGlyphs'>20:00</text>
<text x='2636.40' y='1595.2' font-size='25.5' fill='#d4d4de' textLength='44.98' lengthAdjust='spacingAndGlyphs'>400</text>
<text x='2635.32' y='1673.5' font-size='25.5' fill='#d4d4de' textLength='46.08' lengthAdjust='spacingAndGlyphs'>300</text>
<text x='2635.32' y='1750.3' font-size='25.5' fill='#d4d4de' textLength='46.08' lengthAdjust='spacingAndGlyphs'>200</text>
<text x='2639.85' y='1827.9' font-size='25.5' fill='#d4d4de' textLength='41.48' lengthAdjust='spacingAndGlyphs'>100</text>
<text x='2664.77' y='1905.5' font-size='25.5' fill='#d4d4de' textLength='17.50' lengthAdjust='spacingAndGlyphs'>0</text>
<text transform='translate(2592,1743.5) rotate(-90)' x='-64.02' y='0' font-size='26.5' fill='#d4d4de' textLength='126.22' lengthAdjust='spacingAndGlyphs'>Dust pcs/L</text>
<text x='2624.46' y='1976.5' font-size='25.5' fill='#d4d4de' textLength='402.01' lengthAdjust='spacingAndGlyphs'>dust e00fce68935691a49a9a4247</text>
</svg>
</body></html>
